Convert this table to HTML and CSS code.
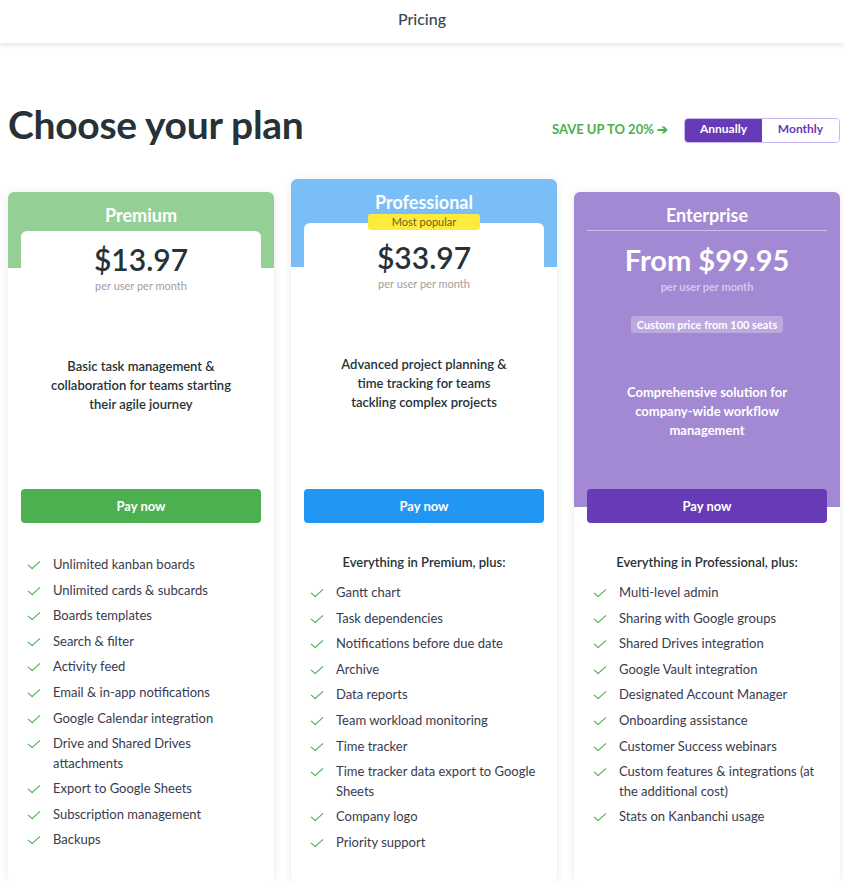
FILE: index.html
```html
<!DOCTYPE html>
<html lang="en">
<head>
<meta charset="utf-8">
<title>Pricing</title>
<link rel="stylesheet" href="styles.css">
</head>
<body>
<header class="topbar">Pricing</header>
<main class="page">
  <div class="title-row">
    <h1 class="page-title">Choose your plan</h1>
    <div class="billing">
      <span class="save">SAVE UP TO 20% ➔</span>
      <div class="toggle">
        <span class="toggle-btn active">Annually</span>
        <span class="toggle-btn">Monthly</span>
      </div>
    </div>
  </div>

  <div class="plans">
    <section class="card card-premium">
      <div class="card-top">
        <h2 class="plan-name">Premium</h2>
        <div class="price-box">
          <div class="price">$13.97</div>
          <div class="per">per user per month</div>
          <p class="desc">Basic task management &amp; collaboration for teams starting their agile journey</p>
        </div>
        <button class="pay pay-green">Pay now</button>
      </div>
      <ul class="features">
        <li>Unlimited kanban boards</li>
        <li>Unlimited cards &amp; subcards</li>
        <li>Boards templates</li>
        <li>Search &amp; filter</li>
        <li>Activity feed</li>
        <li>Email &amp; in-app notifications</li>
        <li>Google Calendar integration</li>
        <li>Drive and Shared Drives attachments</li>
        <li>Export to Google Sheets</li>
        <li>Subscription management</li>
        <li>Backups</li>
      </ul>
    </section>

    <section class="card card-pro">
      <div class="card-top">
        <h2 class="plan-name">Professional</h2>
        <div class="price-box">
          <span class="popular">Most popular</span>
          <div class="price">$33.97</div>
          <div class="per">per user per month</div>
          <p class="desc pro-desc">Advanced project planning &amp; time tracking for teams tackling complex projects</p>
        </div>
        <button class="pay pay-blue">Pay now</button>
      </div>
      <h3 class="plus">Everything in Premium, plus:</h3>
      <ul class="features">
        <li>Gantt chart</li>
        <li>Task dependencies</li>
        <li>Notifications before due date</li>
        <li>Archive</li>
        <li>Data reports</li>
        <li>Team workload monitoring</li>
        <li>Time tracker</li>
        <li>Time tracker data export to Google Sheets</li>
        <li>Company logo</li>
        <li>Priority support</li>
      </ul>
    </section>

    <section class="card card-ent">
      <div class="card-top">
        <h2 class="plan-name ent-name">Enterprise</h2>
        <div class="price ent-price">From $99.95</div>
        <div class="per ent-per">per user per month</div>
        <span class="custom">Custom price from 100 seats</span>
        <p class="desc ent-desc">Comprehensive solution for company-wide workflow management</p>
        <button class="pay pay-purple">Pay now</button>
      </div>
      <h3 class="plus">Everything in Professional, plus:</h3>
      <ul class="features">
        <li>Multi-level admin</li>
        <li>Sharing with Google groups</li>
        <li>Shared Drives integration</li>
        <li>Google Vault integration</li>
        <li>Designated Account Manager</li>
        <li>Onboarding assistance</li>
        <li>Customer Success webinars</li>
        <li>Custom features &amp; integrations (at the additional cost)</li>
        <li>Stats on Kanbanchi usage</li>
      </ul>
    </section>
  </div>
</main>
</body>
</html>
```

FILE: styles.css
```css
* { box-sizing: border-box; }

body {
  margin: 0;
  background: #ffffff;
  font-family: Lato, "Open Sans", "Liberation Sans", sans-serif;
  color: #263238;
}

.topbar {
  height: 43px;
  display: flex;
  align-items: center;
  justify-content: center;
  padding-bottom: 6px;
  font-size: 16px;
  font-weight: 500;
  color: #37474f;
  background: #fff;
  box-shadow: 0 1px 6px rgba(0, 0, 0, 0.14);
  position: relative;
  z-index: 1;
}

.page {
  padding: 0 4px 0 8px;
}

.title-row {
  display: flex;
  align-items: center;
  justify-content: space-between;
  height: 70px;
  margin-top: 52px;
  margin-bottom: 14px;
  padding-bottom: 12px;
}

.page-title {
  margin: 0;
  font-size: 39px;
  font-weight: 700;
  color: #263238;
  letter-spacing: -0.3px;
}

.billing {
  display: flex;
  align-items: center;
  gap: 16px;
  padding-top: 13px;
}

.save {
  font-size: 13px;
  font-weight: 700;
  color: #4caf50;
  margin-top: -3px;
}

.toggle {
  display: flex;
  width: 156px;
  height: 25px;
  border: 1px solid #c9b6ec;
  border-radius: 4px;
  overflow: hidden;
}

.toggle-btn {
  flex: 1;
  display: flex;
  align-items: center;
  justify-content: center;
  font-size: 12px;
  font-weight: 700;
  color: #673ab7;
  background: #fff;
  padding-bottom: 4px;
}

.toggle-btn.active {
  background: #673ab7;
  color: #fff;
}

.plans {
  display: grid;
  grid-template-columns: repeat(3, 266px);
  column-gap: 17px;
  align-items: start;
}

.card {
  background: #fff;
  border-radius: 6px;
  box-shadow: 0 1px 10px rgba(0, 0, 0, 0.09);
  margin-top: 13px;
  height: 689px;
  padding: 0 13px;
}

.card-pro {
  margin-top: 0;
  height: 702px;
}

.card-premium { background: linear-gradient(#94d096 76px, #fff 76px); }
.card-pro { background: linear-gradient(#79bef6 88px, #fff 88px); }
.card-ent { background: linear-gradient(#a388d4 315px, #fff 315px); }

.card-top {
  height: 331px;
  display: flex;
  flex-direction: column;
  align-items: stretch;
}

.card-pro .card-top { height: 344px; }

.plan-name {
  margin: 12px 0 0;
  height: 22px;
  line-height: 22px;
  font-size: 18px;
  font-weight: 700;
  color: #fff;
  text-align: center;
}

.price-box {
  margin-top: 5px;
  background: #fff;
  border-radius: 6px 6px 0 0;
  padding-top: 8px;
  text-align: center;
  display: flex;
  flex-direction: column;
  align-items: center;
}

.card-pro .price-box { margin-top: 10px; }

.popular {
  position: relative;
  z-index: 1;
  margin-top: -17px;
  height: 16px;
  line-height: 16px;
  padding: 0 24px;
  background: #ffeb3b;
  border-radius: 3px;
  font-size: 11px;
  color: #6d5f1e;
}

.card-pro .price { margin-top: 7px; }

.price {
  font-size: 30px;
  line-height: 40px;
  font-weight: 600;
  color: #263238;
  text-align: center;
}

.per {
  font-size: 11px;
  line-height: 16px;
  margin-top: -1px;
  color: #9e9e9e;
  text-align: center;
}

.desc {
  margin: 63px 0 0;
  padding: 0 26px;
  font-size: 13px;
  line-height: 19px;
  font-weight: 600;
  color: #263238;
  text-align: center;
}

.pro-desc {
  padding: 0 34px;
}

.pay {
  margin-top: auto;
  height: 34px;
  border: 0;
  border-radius: 4px;
  padding-bottom: 2px;
  font-family: inherit;
  font-size: 13px;
  font-weight: 700;
  color: #fff;
  cursor: pointer;
}

.pay-green { background: #4caf50; }
.pay-blue { background: #2196f3; }
.pay-purple { background: #673ab7; }

.ent-name {
  height: 27px;
  border-bottom: 1px solid rgba(255, 255, 255, 0.45);
}

.ent-price {
  margin-top: 9px;
  font-size: 29px;
  font-weight: 700;
  color: #fff;
}

.ent-per {
  color: rgba(255, 255, 255, 0.55);
  font-weight: 700;
}

.custom {
  align-self: center;
  margin-top: 21px;
  height: 17px;
  line-height: 17px;
  padding: 0 6px;
  background: rgba(255, 255, 255, 0.28);
  border-radius: 3px;
  font-size: 11px;
  font-weight: 700;
  color: #fff;
}

.ent-desc {
  margin-top: 50px;
  padding: 0 30px;
  color: #fff;
  font-weight: 700;
}

.plus {
  margin: 30px 0 0;
  font-size: 13px;
  line-height: 19px;
  font-weight: 600;
  color: #263238;
  text-align: center;
}

.features {
  list-style: none;
  margin: 32px 0 0;
  padding: 0 0 0 4px;
}

.plus + .features { margin-top: 11px; }

.features li {
  position: relative;
  padding-left: 28px;
  padding-right: 8px;
  margin-bottom: 6.1px;
  font-size: 13px;
  line-height: 19.5px;
  color: #3a3a4e;
}

.features li::before {
  content: "";
  position: absolute;
  left: 6px;
  top: 3px;
  width: 5px;
  height: 10px;
  border-right: 1.5px solid #4caf50;
  border-bottom: 1.5px solid #4caf50;
  transform: rotate(40deg) skewX(-8deg);
  transform-origin: center;
}
```
